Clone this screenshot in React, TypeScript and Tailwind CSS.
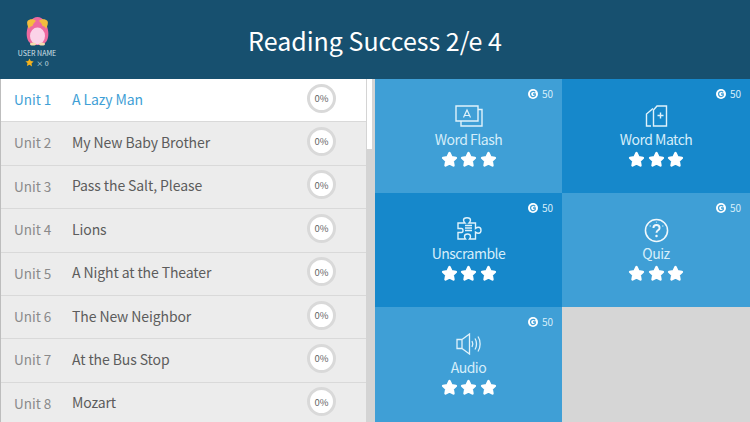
const UNITS = [
  'A Lazy Man',
  'My New Baby Brother',
  'Pass the Salt, Please',
  'Lions',
  'A Night at the Theater',
  'The New Neighbor',
  'At the Bus Stop',
  'Mozart',
]

function WordFlashIcon() {
  return (
    <svg className="-mt-[1px]" width="28" height="22" viewBox="0 0 28 22" fill="none" stroke="#e0f2fb" strokeWidth="1.400">
      <path d="M1 1h22v15H1z" />
      <path d="M23 4.500h4V21H6v-5" />
      <path d="M8.500 12.500L12 5l3.500 7.500M9.800 10.500h4.400" strokeWidth="1.200" />
    </svg>
  )
}

function WordMatchIcon() {
  return (
    <svg className="-mt-[1px]" width="23" height="22" viewBox="0 0 23 22" fill="none" stroke="#e0f2fb" strokeWidth="1.400">
      <path d="M12 1h9.500v20H8.500V5z" />
      <path d="M8 3.500L1.500 9v12H6" />
      <path d="M15.500 7.500v6M12.500 10.500h6" />
    </svg>
  )
}

function UnscrambleIcon() {
  return (
    <svg width="26" height="26" viewBox="0 0 26 26" fill="none" stroke="#e0f2fb" strokeWidth="1.400">
      <path d="M2 6h7c-1-1-1.500-2-1.500-3C7.500 1.500 9 .8 11 .8s3.500.7 3.500 2.200c0 1-.5 2-1.500 3h6.500v5.500c1-.8 2-1.200 3-1.200 1.500 0 2.500 1.300 2.500 3s-1 3-2.500 3c-1 0-2-.4-3-1.200V22h-6c.8-1 1-1.800 1-2.500 0-1.500-1.500-2.500-3-2.500s-3 1-3 2.500c0 .7.200 1.500 1 2.500H2v-6.500h3.500c1 0 1.500-1 1.500-2s-.5-2-1.500-2H2z" />
      <path d="M9 8.500h7M9 11h7M9 13.500h7" />
    </svg>
  )
}

function QuizIcon() {
  return (
    <svg width="25" height="25" viewBox="0 0 26 26" fill="none" stroke="#f0f8fc" strokeWidth="1.600">
      <circle cx="13" cy="13" r="11.500" />
      <path d="M9.800 10.500c0-2 1.400-3.200 3.200-3.200s3.200 1.200 3.200 3c0 2.500-3.200 2.500-3.200 5" strokeWidth="2" />
      <circle cx="13" cy="18.800" r="1.300" fill="#f0f8fc" stroke="none" />
      <path d="M6 8l.8.800M13 3.800v1M20 8l-.8.800" strokeWidth="1.200" />
    </svg>
  )
}

function AudioIcon() {
  return (
    <svg width="26" height="22" viewBox="0 0 26 22" fill="none" stroke="#e0f2fb" strokeWidth="1.300">
      <path d="M1 6.500h5v9H1zM6 6.500L13.500 1v20L6 15.500" />
      <path d="M16 8c1 1.800 1 4.200 0 6M19 5.500c2 3 2 8 0 11M22 3.500c2.800 4 2.800 11 0 15" />
    </svg>
  )
}

function Star() {
  return (
    <svg width="17" height="17" viewBox="0 0 24 24" fill="#fff" stroke="#fff" strokeWidth="3.500" strokeLinejoin="round">
      <path d="M12 3l2.800 5.800 6.200.9-4.500 4.400 1.100 6.300L12 17.400l-5.600 3 1.100-6.300L3 9.700l6.200-.9z" />
    </svg>
  )
}

function Coin() {
  return (
    <svg width="10" height="10" viewBox="0 0 10 10">
      <circle cx="5" cy="5" r="5" fill="#fff" />
      <path d="M7.200 3.400A2.600 2.600 0 1 0 7.200 6.600V5H5" fill="none" stroke="#3f9fd6" strokeWidth="1.300" />
    </svg>
  )
}

function Mascot() {
  return (
    <svg width="23" height="29" viewBox="0 0 23 29">
      <path d="M11.500 0C6 0 3 5 1.500 11 0 16 .5 22 3 25c2 2.500 5 3 8.500 3s6.500-.5 8.500-3c2.500-3 3-9 1.500-14C20 5 17 0 11.500 0z" fill="#ee6aa0" />
      <path d="M10 4C8 1.500 3.500 1.500 1.500 4c-1 1.500 0 5 1.500 8 .5-2 2-3 3.500-3 .5-2 2-4 3.500-5zM13 4c2-2.500 6.500-2.500 8.500 0 1 1.500 0 5-1.500 8-.5-2-2-3-3.500-3-.5-2-2-4-3.500-5z" fill="#f4bd3e" />
      <ellipse cx="11.500" cy="19" rx="7.500" ry="8.500" fill="#fbd3e8" />
      <ellipse cx="7" cy="27" rx="3" ry="1.500" fill="#f5dcae" />
      <ellipse cx="16" cy="27" rx="3" ry="1.500" fill="#f5dcae" />
    </svg>
  )
}

function Header() {
  return (
    <header className="relative flex h-[79px] shrink-0 items-center justify-center bg-[#17506f]">
      <div className="absolute left-[12px] top-[17px] flex w-[50px] flex-col items-center">
        <Mascot />
        <div className="mt-[3px] whitespace-nowrap text-[7px] leading-[9px] text-[#d5e2ea]">USER NAME</div>
        <div className="flex items-center gap-[2px] text-[7px] leading-[8px] text-[#d5e2ea]">
          <svg width="9" height="9" viewBox="0 0 24 24" fill="#f5b21c">
            <path d="M12 1l3.400 7.300 7.600 1-5.600 5.300 1.500 7.900L12 17.700l-6.900 3.800 1.500-7.900L1 9.300l7.600-1z" />
          </svg>
          <span>× 0</span>
        </div>
      </div>
      <h1 className="text-[25px] leading-[32px] text-white">Reading Success 2/e 4</h1>
    </header>
  )
}

function UnitRow({ index, title }: { index: number; title: string }) {
  const active = index === 0
  return (
    <div className={`flex h-[43.4px] items-center border-b border-[#d9d9d9] pb-[2px] ${active ? 'bg-white' : 'bg-[#ececec]'}`}>
      <span className={`ml-[13px] w-[58px] text-[13.500px] ${active ? 'text-[#3f9fd6]' : 'text-[#8a8a8a]'}`}>Unit {index + 1}</span>
      <span className={`flex-1 text-[14px] tracking-[-0.1px] ${active ? 'text-[#3f9fd6]' : 'text-[#5c5c5c]'}`}>{title}</span>
      <span className="mr-[30px] mb-[2px] flex h-[29px] w-[29px] items-center justify-center rounded-full border-[3px] border-[#d9d9d9] bg-white text-[9.500px] text-[#666]">0%</span>
    </div>
  )
}

function Tile({ label, Icon, dark }: { label: string; Icon: () => React.ReactNode; dark: boolean }) {
  return (
    <div className={`relative flex flex-col items-center pt-[24px] ${dark ? 'bg-[#1688cb]' : 'bg-[#3f9fd6]'}`}>
      <div className="absolute right-[9px] top-[9px] flex items-center gap-[4px] text-[10px] leading-[12px] text-[#d6eefa]">
        <Coin />
        <span>50</span>
      </div>
      <div className="flex h-[26px] items-center justify-center">
        <Icon />
      </div>
      <div className="-mt-[1px] text-[14px] leading-[22px] tracking-[-0.5px] text-[#d6eefa]">{label}</div>
      <div className="mt-[1px] flex gap-[2.500px]">
        <Star />
        <Star />
        <Star />
      </div>
    </div>
  )
}

export default function App() {
  return (
    <div className="flex h-[422px] w-[750px] flex-col overflow-hidden bg-white font-['Noto_Sans_CJK_KR','Noto_Sans',sans-serif]">
      <Header />
      <div className="flex min-h-0 flex-1">
        <div className="w-[366px] shrink-0 overflow-hidden border-l border-[#bdbdbd]">
          {UNITS.map((title, i) => (
            <UnitRow key={title} index={i} title={title} />
          ))}
        </div>
        <div className="w-[9px] shrink-0 bg-[#d4d4d4]">
          <div className="ml-[1px] h-[70px] w-[5px] bg-white" />
        </div>
        <div className="grid flex-1 grid-cols-[187px_188px] grid-rows-[114px_114px_115px] bg-[#d6d6d6]">
          <Tile label="Word Flash" Icon={WordFlashIcon} dark={false} />
          <Tile label="Word Match" Icon={WordMatchIcon} dark />
          <Tile label="Unscramble" Icon={UnscrambleIcon} dark />
          <Tile label="Quiz" Icon={QuizIcon} dark={false} />
          <Tile label="Audio" Icon={AudioIcon} dark={false} />
        </div>
      </div>
    </div>
  )
}
